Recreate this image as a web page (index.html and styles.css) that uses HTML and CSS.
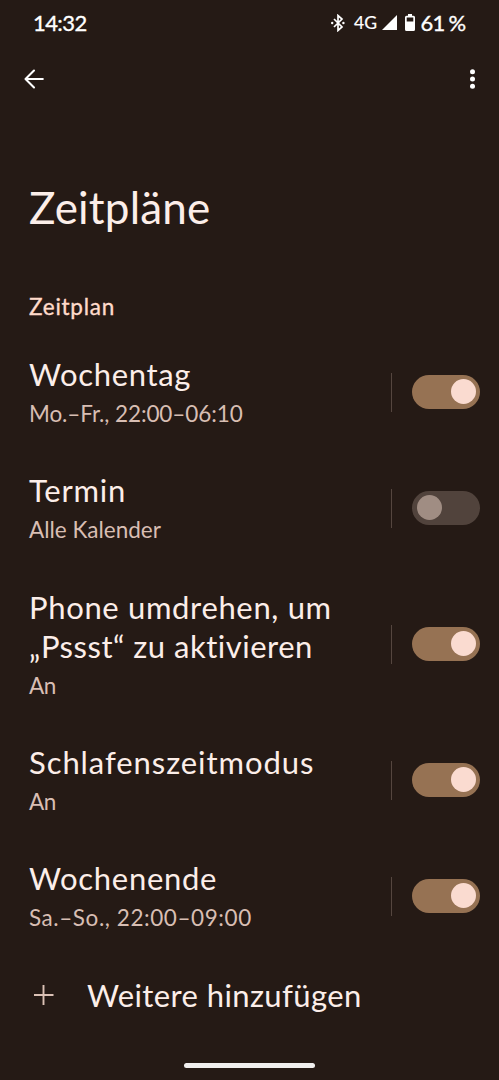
FILE: index.html
```html
<!DOCTYPE html>
<html lang="de">
<head>
<meta charset="utf-8">
<title>Zeitpläne</title>
<link rel="stylesheet" href="styles.css">
</head>
<body>
<div class="screen">
  <header class="status">
    <span class="time">14:32</span>
    <div class="indicators">
      <svg class="bluetooth" width="14" height="18" viewBox="0 0 14 18"><path d="M3 5l8 8-4 3.500V1.500L11 5l-8 8" fill="none" stroke="#fff" stroke-width="1.700"/><circle cx="1.200" cy="9" r="1.200" fill="#fff"/><circle cx="12.400" cy="9" r="1.200" fill="#fff"/></svg>
      <span class="network">4G</span>
      <svg class="signal" width="15" height="15" viewBox="0 0 15 15"><path d="M15 0v15H0z" fill="#fff"/></svg>
      <svg class="battery" width="10" height="17" viewBox="0 0 10 17"><path fill-rule="evenodd" d="M3 0h4v1.700h1.500Q10 1.700 10 3.200v12.300Q10 17 8.500 17h-7Q0 17 0 15.500V3.200Q0 1.700 1.500 1.700H3zM1.700 3.400v4.200h6.600V3.400z" fill="#fff"/></svg>
      <span class="percent">61 %</span>
    </div>
  </header>
  <nav class="toolbar">
    <svg width="20" height="20" viewBox="0 0 20 20"><path d="M18.800 10H1.700M10 1.500L1.500 10l8.500 8.500" fill="none" stroke="#fff" stroke-width="2.100" stroke-linecap="round" stroke-linejoin="round"/></svg>
    <svg width="6" height="20" viewBox="0 0 6 20"><g fill="#fff"><circle cx="3.500" cy="2.800" r="2.500"/><circle cx="3.500" cy="10" r="2.500"/><circle cx="3.500" cy="17.200" r="2.500"/></g></svg>
  </nav>
  <h1 class="heading">Zeitpläne</h1>
  <h2 class="category">Zeitplan</h2>
  <main class="list">
    <div class="row">
      <div class="text"><div class="title t-weekday">Wochentag</div><div class="summary s-weekday">Mo.–Fr., 22:00–06:10</div></div>
      <div class="switch on"><span class="thumb"></span></div>
    </div>
    <div class="row">
      <div class="text"><div class="title t-event">Termin</div><div class="summary">Alle Kalender</div></div>
      <div class="switch"><span class="thumb"></span></div>
    </div>
    <div class="row">
      <div class="text"><div class="title"><span class="t-flip">Phone umdrehen, um</span><br><span class="t-shh">„Pssst“ zu aktivieren</span></div><div class="summary s-on">An</div></div>
      <div class="switch on"><span class="thumb"></span></div>
    </div>
    <div class="row">
      <div class="text"><div class="title t-bedtime">Schlafenszeitmodus</div><div class="summary s-on">An</div></div>
      <div class="switch on"><span class="thumb"></span></div>
    </div>
    <div class="row">
      <div class="text"><div class="title t-weekend">Wochenende</div><div class="summary s-weekend">Sa.–So., 22:00–09:00</div></div>
      <div class="switch on"><span class="thumb"></span></div>
    </div>
    <div class="add">
      <svg width="20" height="20" viewBox="0 0 20 20"><path d="M9.500 0v20M0 10h19.500" stroke="#dbc1b5" stroke-width="1.900"/></svg>
      <span class="title t-add">Weitere hinzufügen</span>
    </div>
  </main>
  <div class="home"></div>
</div>
</body>
</html>
```
FILE: styles.css
```css
* { box-sizing: border-box; }
body { margin: 0; background: #251a15; font-family: Lato, "Open Sans", sans-serif; font-variant-ligatures: none; }
svg { display: block; flex: none; }
.screen { width: 499px; height: 1080px; display: flex; flex-direction: column; overflow: hidden; color: #fff; white-space: nowrap; }
.status { height: 45px; padding: 0 34px 0 33px; display: flex; justify-content: space-between; align-items: center; }
.time, .percent { font-size: 22px; font-weight: 400; line-height: 30px; -webkit-text-stroke: 0.35px #fff; }
.time { letter-spacing: -0.6px; }
.percent { width: 44.500px; letter-spacing: -0.8px; word-spacing: -0.800px; }
.indicators { display: flex; align-items: center; }
.network { width: 24px; margin: 0 4px 0 9px; font-size: 17.500px; line-height: 24px; -webkit-text-stroke: 0.2px #fff; }
.battery { margin: 0 5.500px 0 8px; }
.toolbar { height: 67px; padding: 0 24px; display: flex; justify-content: space-between; align-items: center; }
.heading { margin: 65px 0 0 29px; font-size: 44px; font-weight: 400; line-height: 60px; letter-spacing: 0.2px; color: #fceee9; }
.category { margin: 54px 0 0 29px; font-size: 22.500px; font-weight: 400; line-height: 32px; letter-spacing: 0.75px; color: #ffdbcb; -webkit-text-stroke: 0.35px #ffdbcb; }
.list { padding-top: 10.450px; }
.row { display: flex; align-items: center; justify-content: space-between; padding: 21.670px 19px 21.670px 29px; }
.title { font-size: 31px; line-height: 39px; color: #fceee9; }
.summary { margin: 4px 0 -1px; font-size: 22.500px; line-height: 31px; color: #d8beb3; }
.t-weekday { letter-spacing: 0.65px; }
.t-event { letter-spacing: 0.8px; }
.t-flip { letter-spacing: 0.66px; }
.t-shh { letter-spacing: 0.5px; }
.t-bedtime { letter-spacing: 0.93px; }
.t-weekend { letter-spacing: 0.7px; }
.t-add { letter-spacing: 0.4px; }
.s-weekday { letter-spacing: -0.1px; }
.s-weekend { letter-spacing: 0.57px; }
.s-on { letter-spacing: -0.5px; }
.switch { width: 68px; height: 34px; padding: 0 4.500px; border-radius: 17px; background: #51433c; display: flex; align-items: center; position: relative; }
.switch::before { content: ""; position: absolute; left: -21px; top: -2px; width: 1px; height: 39px; background: #55463f; }
.switch.on { background: #967253; justify-content: flex-end; }
.thumb { width: 25px; height: 25px; border-radius: 50%; background: #a08d83; }
.on .thumb { background: #fadbd0; }
.add { height: 82px; padding-left: 34px; display: flex; align-items: center; gap: 33px; }
.home { width: 131px; height: 5px; margin: auto auto 12px; border-radius: 3px; background: #f1efee; }
```
